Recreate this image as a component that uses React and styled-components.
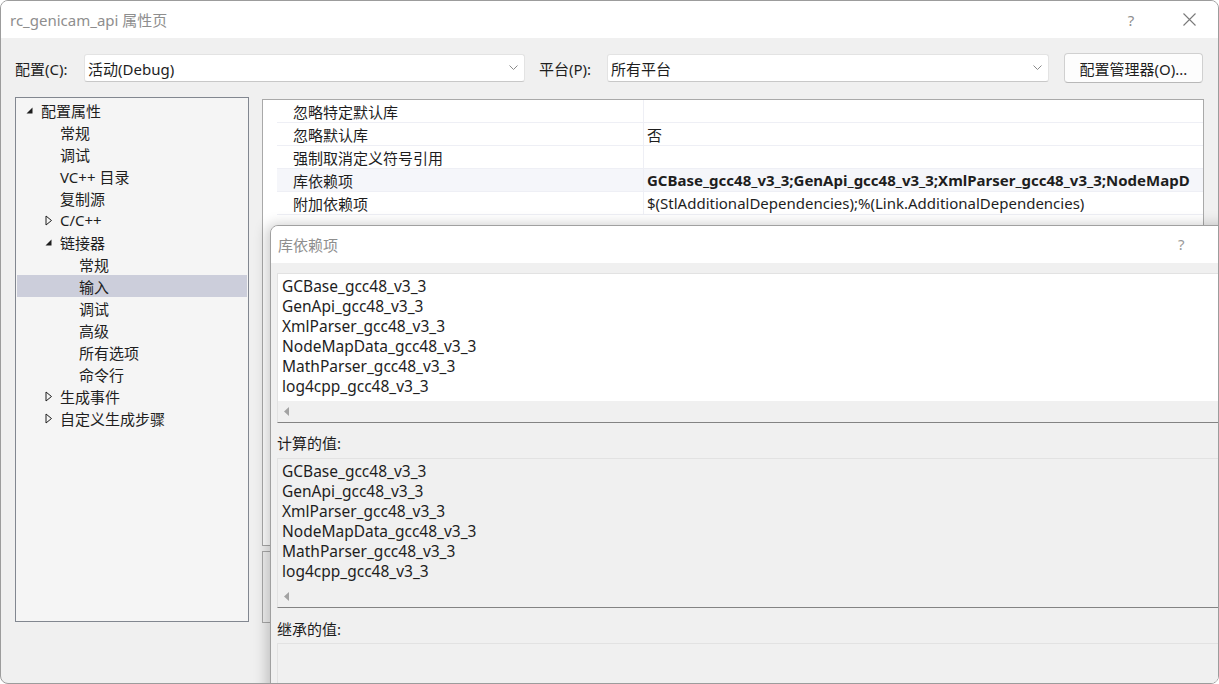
import React from "react";
import styled, { createGlobalStyle } from "styled-components";

const FONT = `"Noto Sans", "Noto Sans CJK SC", sans-serif`;

const GlobalStyle = createGlobalStyle`
  html, body {
    margin: 0;
    padding: 0;
    background: #ffffff;
  }
  body {
    font-family: ${FONT};
    color: #1e1e1e;
  }
  * {
    box-sizing: border-box;
  }
`;

const Window = styled.div`
  position: relative;
  width: 1219px;
  height: 684px;
  border: 1px solid #9c9c9c;
  border-radius: 8px;
  overflow: hidden;
  background: #f0f0f0;
  display: flex;
  flex-direction: column;
`;

const TitleBar = styled.div`
  height: 37px;
  background: #ffffff;
  display: flex;
  align-items: center;
  justify-content: space-between;
  padding-left: 9px;
  flex-shrink: 0;
`;

const TitleText = styled.div`
  font-size: 15px;
  color: #8e8e8e;
`;

const TitleButtons = styled.div`
  display: flex;
  align-items: center;
  height: 100%;
`;

const TitleButton = styled.div`
  width: 58px;
  height: 100%;
  display: flex;
  align-items: center;
  justify-content: center;
  color: #8e8e8e;
  font-size: 15px;
`;

const Body = styled.div`
  flex: 1;
  padding: 16px 14px 0 14px;
  display: flex;
  flex-direction: column;
`;

const ConfigRow = styled.div`
  display: flex;
  align-items: center;
  height: 28px;
`;

const Label = styled.div`
  width: ${(p) => p.$w}px;
  font-size: 15px;
  white-space: nowrap;
`;

const Combo = styled.div`
  width: ${(p) => p.$w}px;
  height: 28px;
  margin-right: ${(p) => p.$mr}px;
  background: #ffffff;
  border: 1px solid #e3e3e3;
  border-bottom-color: #c8c8c8;
  border-radius: 3px;
  display: flex;
  align-items: center;
  justify-content: space-between;
  padding: 0 6px 0 3px;
  font-size: 15px;
`;

const Button = styled.div`
  width: 139px;
  height: 30px;
  background: #fdfdfd;
  border: 1px solid #d0d0d0;
  border-bottom-color: #b8b8b8;
  border-radius: 4px;
  display: flex;
  align-items: center;
  justify-content: center;
  font-size: 15px;
`;

const Main = styled.div`
  display: flex;
  margin-top: 15px;
  gap: 13px;
`;

const Tree = styled.div`
  width: 234px;
  height: 525px;
  background: #f5f5f5;
  border: 1px solid #828790;
  padding: 1px;
`;

const TreeRow = styled.div`
  height: 22px;
  display: flex;
  align-items: center;
  padding-left: ${(p) => 7 + p.$level * 19}px;
  background: ${(p) => (p.$selected ? "#cccedb" : "transparent")};
  font-size: 15px;
`;

const Arrow = styled.div`
  width: 17px;
  height: 22px;
  display: flex;
  align-items: center;
  padding-left: 2px;
`;

const RightCol = styled.div`
  flex: 1;
  display: flex;
  flex-direction: column;
  padding-top: 2px;
`;

const Grid = styled.div`
  height: 447px;
  background: #ffffff;
  border: 1px solid #a9a9a9;
  padding-left: 14px;
`;

const GridRow = styled.div`
  height: 23px;
  display: grid;
  grid-template-columns: 367px 1fr;
  border-bottom: 1px solid #eeeff5;
  background: ${(p) => (p.$selected ? "#f5f6fa" : "#ffffff")};
  font-size: 15px;
`;

const NameCell = styled.div`
  padding-left: 16px;
  display: flex;
  align-items: center;
  border-right: 1px solid #eeeff5;
  white-space: nowrap;
`;

const ValueCell = styled.div`
  padding-left: 3px;
  display: flex;
  align-items: center;
  white-space: nowrap;
  overflow: hidden;
  font-weight: ${(p) => (p.$bold ? 700 : 400)};
`;

const Description = styled.div`
  margin-top: 5px;
  height: 72px;
  border: 1px solid #a9a9a9;
  background: #f0f0f0;
`;

const Overlay = styled.div`
  position: absolute;
  left: 269px;
  top: 224px;
  width: 1000px;
  height: 520px;
  background: #f0f0f0;
  border: 1px solid #a0a0a0;
  border-top-left-radius: 8px;
  overflow: hidden;
  box-shadow: -3px 0 14px rgba(0, 0, 0, 0.22);
  display: flex;
  flex-direction: column;
`;

const OverlayTitle = styled.div`
  height: 37px;
  background: #ffffff;
  display: flex;
  align-items: center;
  padding-left: 7px;
  font-size: 15px;
  color: #8e8e8e;
  flex-shrink: 0;
`;

const OverlayHelp = styled.div`
  position: absolute;
  left: 907px;
  top: 8px;
  font-size: 15px;
  color: #9a9a9a;
`;

const OverlayBody = styled.div`
  padding: 10px 0 0 6px;
  display: flex;
  flex-direction: column;
`;

const EditBox = styled.div`
  height: 150px;
  background: ${(p) => (p.$readonly ? "#f0f0f0" : "#ffffff")};
  border: 1px solid #e2e2e2;
  border-bottom: 1px solid #838383;
  border-right: none;
  display: flex;
  flex-direction: column;
`;

const Lines = styled.div`
  flex: 1;
  padding: 2px 0 0 4px;
  font-size: 15.5px;
  line-height: 20px;
`;

const HScroll = styled.div`
  height: 21px;
  background: #f0f0f0;
  display: flex;
  align-items: center;
  padding-left: 6px;
`;

const FieldLabel = styled.div`
  margin-top: ${(p) => p.$mt}px;
  height: 20px;
  line-height: 20px;
  font-size: 15px;
  margin-bottom: ${(p) => p.$mb}px;
`;

const EmptyBox = styled.div`
  height: 60px;
  border: 1px solid #e2e2e2;
  border-right: none;
  background: #f0f0f0;
`;

const Expanded = () => (
  <svg width="7" height="7" viewBox="0 0 7 7">
    <polygon points="6.5,0.5 6.5,6.5 0.5,6.5" fill="#1e1e1e" />
  </svg>
);

const Collapsed = () => (
  <svg width="8" height="11" viewBox="0 0 8 11">
    <polygon points="1,1 6.5,5.5 1,10" fill="none" stroke="#1e1e1e" strokeWidth="1" />
  </svg>
);

const Chevron = () => (
  <svg width="9" height="6" viewBox="0 0 9 6">
    <polyline points="0.5,0.5 4.5,4.5 8.5,0.5" fill="none" stroke="#8a8a8a" strokeWidth="1" />
  </svg>
);

const CloseIcon = () => (
  <svg width="13" height="13" viewBox="0 0 13 13">
    <path d="M0.5 0.5 L12.5 12.5 M12.5 0.5 L0.5 12.5" stroke="#7a7a7a" strokeWidth="1.1" />
  </svg>
);

const LeftArrow = () => (
  <svg width="5" height="9" viewBox="0 0 5 9">
    <polygon points="5,0 0,4.5 5,9" fill="#a3a3a3" />
  </svg>
);

const treeItems = [
  { label: "配置属性", level: 0, arrow: "open" },
  { label: "常规", level: 1 },
  { label: "调试", level: 1 },
  { label: "VC++ 目录", level: 1 },
  { label: "复制源", level: 1 },
  { label: "C/C++", level: 1, arrow: "closed" },
  { label: "链接器", level: 1, arrow: "open" },
  { label: "常规", level: 2 },
  { label: "输入", level: 2, selected: true },
  { label: "调试", level: 2 },
  { label: "高级", level: 2 },
  { label: "所有选项", level: 2 },
  { label: "命令行", level: 2 },
  { label: "生成事件", level: 1, arrow: "closed" },
  { label: "自定义生成步骤", level: 1, arrow: "closed" },
];

const libs = [
  "GCBase_gcc48_v3_3",
  "GenApi_gcc48_v3_3",
  "XmlParser_gcc48_v3_3",
  "NodeMapData_gcc48_v3_3",
  "MathParser_gcc48_v3_3",
  "log4cpp_gcc48_v3_3",
];

const props = [
  { name: "忽略特定默认库", value: "" },
  { name: "忽略默认库", value: "否" },
  { name: "强制取消定义符号引用", value: "" },
  {
    name: "库依赖项",
    value: libs.slice(0, 3).join(";") + ";NodeMapD",
    bold: true,
    selected: true,
  },
  { name: "附加依赖项", value: "$(StlAdditionalDependencies);%(Link.AdditionalDependencies)" },
];

export default function App() {
  return (
    <>
      <GlobalStyle />
      <Window>
        <TitleBar>
          <TitleText>rc_genicam_api 属性页</TitleText>
          <TitleButtons>
            <TitleButton>?</TitleButton>
            <TitleButton>
              <CloseIcon />
            </TitleButton>
          </TitleButtons>
        </TitleBar>
        <Body>
          <ConfigRow>
            <Label $w={69}>配置(C):</Label>
            <Combo $w={441} $mr={14}>
              活动(Debug)
              <Chevron />
            </Combo>
            <Label $w={68}>平台(P):</Label>
            <Combo $w={442} $mr={15}>
              所有平台
              <Chevron />
            </Combo>
            <Button>配置管理器(O)...</Button>
          </ConfigRow>
          <Main>
            <Tree>
              {treeItems.map((item, i) => (
                <TreeRow key={i} $level={item.level} $selected={item.selected}>
                  <Arrow>
                    {item.arrow === "open" && <Expanded />}
                    {item.arrow === "closed" && <Collapsed />}
                  </Arrow>
                  {item.label}
                </TreeRow>
              ))}
            </Tree>
            <RightCol>
              <Grid>
                {props.map((p) => (
                  <GridRow key={p.name} $selected={p.selected}>
                    <NameCell>{p.name}</NameCell>
                    <ValueCell $bold={p.bold}>{p.value}</ValueCell>
                  </GridRow>
                ))}
              </Grid>
              <Description />
            </RightCol>
          </Main>
        </Body>

        <Overlay>
          <OverlayTitle>库依赖项</OverlayTitle>
          <OverlayHelp>?</OverlayHelp>
          <OverlayBody>
            <EditBox>
              <Lines>
                {libs.map((l) => (
                  <div key={l}>{l}</div>
                ))}
              </Lines>
              <HScroll>
                <LeftArrow />
              </HScroll>
            </EditBox>
            <FieldLabel $mt={10} $mb={5}>计算的值:</FieldLabel>
            <EditBox $readonly>
              <Lines>
                {libs.map((l) => (
                  <div key={l}>{l}</div>
                ))}
              </Lines>
              <HScroll>
                <LeftArrow />
              </HScroll>
            </EditBox>
            <FieldLabel $mt={11} $mb={4}>继承的值:</FieldLabel>
            <EmptyBox />
          </OverlayBody>
        </Overlay>
      </Window>
    </>
  );
}
